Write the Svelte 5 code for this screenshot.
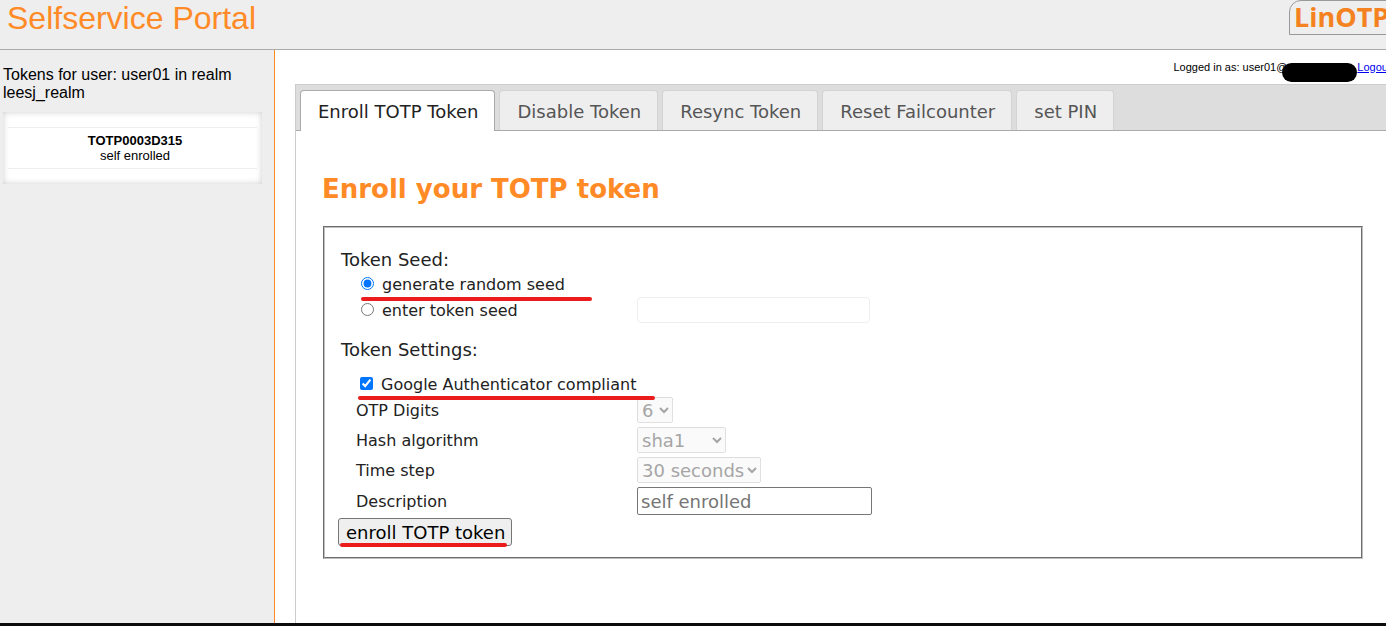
<script lang="ts">
  const tabs = ["Enroll TOTP Token", "Disable Token", "Resync Token", "Reset Failcounter", "set PIN"];

  let active = $state(0);
  let seedMode = $state("random");
  let seed = $state("");
  let googleCompliant = $state(true);
  let digits = $state("6");
  let hash = $state("sha1");
  let step = $state("30");
  let description = $state("");
</script>

<div class="page">
  <header>
    <h1>Selfservice Portal</h1>
    <div class="logo">LinOTP</div>
  </header>

  <div class="columns">
    <aside>
      <p class="who">Tokens for user: user01 in realm leesj_realm</p>
      <div class="token-box">
        <div class="token">
          <b>TOTP0003D315</b>
          <span>self enrolled</span>
        </div>
      </div>
    </aside>

    <main>
      <div class="login">
        Logged in as: user01@<span class="redacted"></span><a href="#logout">Logout</a>
      </div>

      <div class="panel">
        <nav>
          {#each tabs as tab, i}
            <button type="button" class="tab" class:active={active === i} onclick={() => (active = i)}>{tab}</button>
          {/each}
        </nav>

        <section>
          <h2>Enroll your TOTP token</h2>
          <form onsubmit={(e) => e.preventDefault()}>
            <fieldset>
              <h3>Token Seed:</h3>
              <div class="row seed">
                <label class="marked">
                  <input type="radio" name="seed" value="random" bind:group={seedMode} />generate random seed
                </label>
              </div>
              <div class="row seed">
                <label>
                  <input type="radio" name="seed" value="enter" bind:group={seedMode} />enter token seed
                </label>
                <input
                  class="seed-text"
                  type="text"
                  aria-label="token seed"
                  bind:value={seed}
                  disabled={seedMode === "random"}
                />
              </div>

              <h3 class="second">Token Settings:</h3>
              <div class="row google">
                <label class="marked">
                  <input type="checkbox" bind:checked={googleCompliant} />Google Authenticator compliant
                </label>
              </div>
              <div class="row">
                <label for="digits">OTP Digits</label>
                <select id="digits" class="digits" bind:value={digits} disabled={googleCompliant}>
                  <option>6</option>
                  <option>8</option>
                </select>
              </div>
              <div class="row">
                <label for="hash">Hash algorithm</label>
                <select id="hash" class="hash" bind:value={hash} disabled={googleCompliant}>
                  <option>sha1</option>
                  <option>sha256</option>
                </select>
              </div>
              <div class="row">
                <label for="step">Time step</label>
                <select id="step" class="step" bind:value={step} disabled={googleCompliant}>
                  <option value="30">30 seconds</option>
                  <option value="60">60 seconds</option>
                </select>
              </div>
              <div class="row last">
                <label for="desc">Description</label>
                <input id="desc" class="desc" type="text" placeholder="self enrolled" bind:value={description} />
              </div>
              <button class="submit marked">enroll TOTP token</button>
            </fieldset>
          </form>
        </section>
      </div>
    </main>
  </div>
</div>

<style>
  :global(body) {
    margin: 0;
    overflow: hidden;
  }
  .page,
  .page * {
    box-sizing: border-box;
  }
  /* content is a little wider than the viewport */
  .page {
    width: calc(100% + 16px);
    min-height: 100vh;
    display: flex;
    flex-direction: column;
    border-bottom: 3px solid #0c0c0c;
    background: #fff;
    color: #000;
    font-family: "Liberation Sans", Arial, sans-serif;
  }
  header {
    display: flex;
    justify-content: space-between;
    align-items: flex-start;
    height: 50px;
    padding-left: 7px;
    background: #eee;
    border-bottom: 1px solid #aaa;
  }
  h1 {
    margin: 0;
    font-size: 32px;
    line-height: 36px;
    font-weight: normal;
    color: #ff8a26;
  }
  .logo {
    width: 113px;
    height: 35px;
    padding-left: 4px;
    border: 1px solid #999;
    border-radius: 12px 0 12px 0;
    font: bold 27px/32px "Open Sans", sans-serif;
    color: #f58220;
  }
  .columns {
    flex: 1;
    display: flex;
  }
  aside {
    flex: 0 0 275px;
    padding: 16px 12px 0 3px;
    background: #eee;
    border-right: 1px solid #ff8a26;
  }
  .who {
    margin: 0 0 10px;
    font-size: 16px;
    line-height: 18px;
  }
  .token-box {
    height: 72px;
    padding: 15px 5px;
    background: #fff;
    box-shadow: inset 0 0 6px #ccc;
  }
  .token {
    height: 42px;
    padding: 5px 0 0 5px;
    display: flex;
    flex-direction: column;
    align-items: center;
    border-top: 1px solid #eee;
    border-bottom: 1px solid #eee;
    font-size: 13px;
    line-height: 15px;
  }
  main {
    flex: 1;
    min-width: 0;
    display: flex;
    flex-direction: column;
    padding-left: 20px;
  }
  .login {
    display: flex;
    justify-content: flex-end;
    height: 34px;
    padding: 10px 11px 0 0;
    font-size: 11px;
    line-height: 14px;
  }
  .redacted {
    width: 75px;
    height: 19px;
    margin: 3px 0 0 -5px;
    border-radius: 10px;
    background: #000;
    flex: none;
  }
  .login a {
    color: #00e;
  }
  .panel {
    flex: 1;
    border-left: 1px solid #ccc;
    border-top: 1px solid #ccc;
    font-family: Verdana, "DejaVu Sans", sans-serif;
    color: #222;
  }
  nav {
    display: flex;
    gap: 4px;
    height: 46px;
    padding: 5px 4px 0;
    background: #ddd;
    border-bottom: 1px solid #aaa;
  }
  .tab {
    height: 40px;
    padding: 1px 16px 0 17px;
    border: 1px solid #d3d3d3;
    border-bottom: 0;
    border-radius: 4px 4px 0 0;
    background: #eee;
    color: #555;
    font: 18px/40px "DejaVu Sans", sans-serif;
  }
  .tab.active {
    height: 41px;
    border-color: #aaa;
    background: #fff;
    color: #222;
  }
  section {
    padding: 42px 39px 0 26px;
  }
  h2 {
    margin: 0 0 20px;
    font-size: 26px;
    line-height: 33px;
    color: #ff8a26;
  }
  fieldset {
    margin: 0 0 0 1px;
    padding: 20px 13px 11px;
    border: 2px groove #c0c0c0;
  }
  h3 {
    margin: 0 3px;
    font-size: 18px;
    line-height: 24px;
    font-weight: normal;
  }
  h3.second {
    margin-top: 14px;
  }
  .row {
    display: flex;
    align-items: center;
    height: 30px;
    padding-left: 18px;
  }
  .row.seed {
    height: 26px;
    padding-left: 23px;
  }
  .row.google {
    height: 34px;
    padding: 12px 0 0 22px;
  }
  .row.last {
    height: 32px;
  }
  label {
    width: 281px;
    font-size: 16px;
    line-height: 24px;
  }
  .seed label {
    width: 276px;
  }
  label input {
    width: 13px;
    height: 13px;
    margin: 0 8px 0 0;
  }
  .marked {
    position: relative;
  }
  .marked::after {
    content: "";
    position: absolute;
    z-index: 1;
    left: 0;
    bottom: -4px;
    width: 231px;
    height: 4px;
    border-radius: 2px;
    background: #ea1c1c;
  }
  .google .marked::after {
    left: -2px;
    bottom: -3px;
    width: 297px;
  }
  .submit.marked::after {
    left: 1px;
    bottom: -2px;
    width: 167px;
  }
  select,
  .seed-text,
  .desc,
  .submit {
    margin: 0 0 2px;
    height: 26px;
    font: 18px "DejaVu Sans", sans-serif;
  }
  .digits {
    width: 36px;
  }
  .hash {
    width: 89px;
  }
  .step {
    width: 124px;
  }
  .seed-text {
    width: 233px;
    border: 1px solid #eee;
    border-radius: 4px;
    background: #fff;
  }
  .desc {
    width: 235px;
    height: 28px;
    padding: 1px 3px;
    border: 1px solid #767676;
    border-radius: 2px;
  }
  .submit {
    display: block;
    height: 28px;
    margin: 0;
    padding: 0 6px 0 7px;
    border: 1px solid #767676;
    border-radius: 3px;
    background: #efefef;
    color: #000;
  }
</style>
